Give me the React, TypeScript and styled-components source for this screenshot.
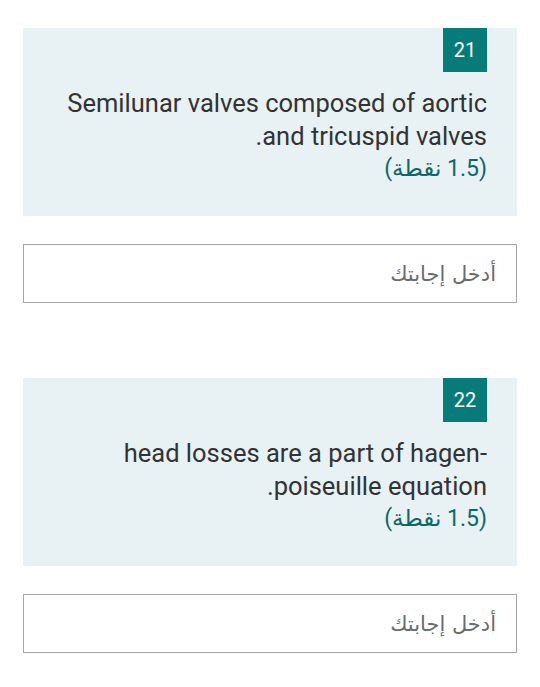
import React from "react";
import styled, { createGlobalStyle } from "styled-components";

const Global = createGlobalStyle`
  html, body { margin: 0; padding: 0; background: #ffffff; }
  body { font-family: Roboto, "DejaVu Sans", sans-serif; }
`;

const Page = styled.div`
  direction: rtl;
  padding: 28px 23px 0 23px;
  display: flex;
  flex-direction: column;
  gap: 75px;
`;

const Question = styled.section`
  display: flex;
  flex-direction: column;
  gap: 28px;
`;

const Card = styled.div`
  background: #e8f1f4;
  padding: 0 30px;
  height: 188px;
  box-sizing: border-box;
  display: flex;
  flex-direction: column;
  align-items: flex-start;
`;

const Badge = styled.div`
  width: 44px;
  height: 44px;
  background: #077b79;
  color: #ffffff;
  font-family: Roboto, sans-serif;
  font-size: 20px;
  display: flex;
  align-items: center;
  justify-content: center;
`;

const Title = styled.div`
  margin-top: 15px;
  font-family: Roboto, "DejaVu Sans", sans-serif;
  font-size: 25.5px;
  line-height: 33px;
  color: #333333;
`;

const Points = styled.div`
  font-family: Roboto, "DejaVu Sans", sans-serif;
  font-size: 23px;
  line-height: 31px;
  color: #0f6669;
`;

const AnswerBox = styled.div`
  height: 59px;
  box-sizing: border-box;
  border: 1px solid #a6a6a6;
  display: flex;
  align-items: center;
  padding: 0 20px;
  font-family: "DejaVu Sans", sans-serif;
  font-size: 21px;
  color: #6b6b6b;
`;

const questions = [
  { n: 21, text: "Semilunar valves composed of aortic and tricuspid valves." },
  { n: 22, text: "head losses are a part of hagen-poiseuille equation." },
];

export default function App() {
  return (
    <>
      <Global />
      <Page>
        {questions.map((q) => (
          <Question key={q.n}>
            <Card>
              <Badge>{q.n}</Badge>
              <Title>{q.text}</Title>
              <Points>(1.5 نقطة)</Points>
            </Card>
            <AnswerBox>أدخل إجابتك</AnswerBox>
          </Question>
        ))}
      </Page>
    </>
  );
}
